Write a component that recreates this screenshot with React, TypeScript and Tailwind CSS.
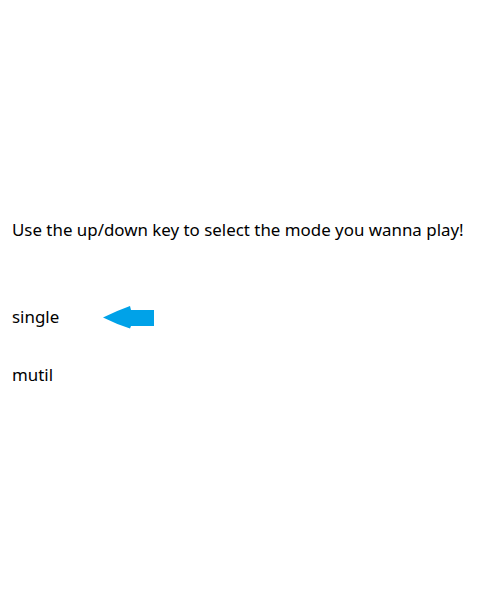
export default function App() {
  return (
    <div className="w-[480px] h-[600px] bg-white text-black pl-3 pt-[218px] font-['Noto_Sans',sans-serif] text-[16.9px] leading-[24px]">
      <div>Use the up/down key to select the mode you wanna play!</div>
      <div className="mt-[63px] flex items-center h-[24px]">
        <span className="w-[90px]">single</span>
        <svg width="53" height="23" viewBox="0 0 53 23" className="mt-[1px]">
          <path d="M1 11.5 Q14 5 28 0 L29 4 L52 4 L52 20 L29 20 L28 22.5 Q14 18 1 11.5 Z" fill="#00a2e8" />
        </svg>
      </div>
      <div className="mt-[34px]">mutil</div>
    </div>
  );
}
